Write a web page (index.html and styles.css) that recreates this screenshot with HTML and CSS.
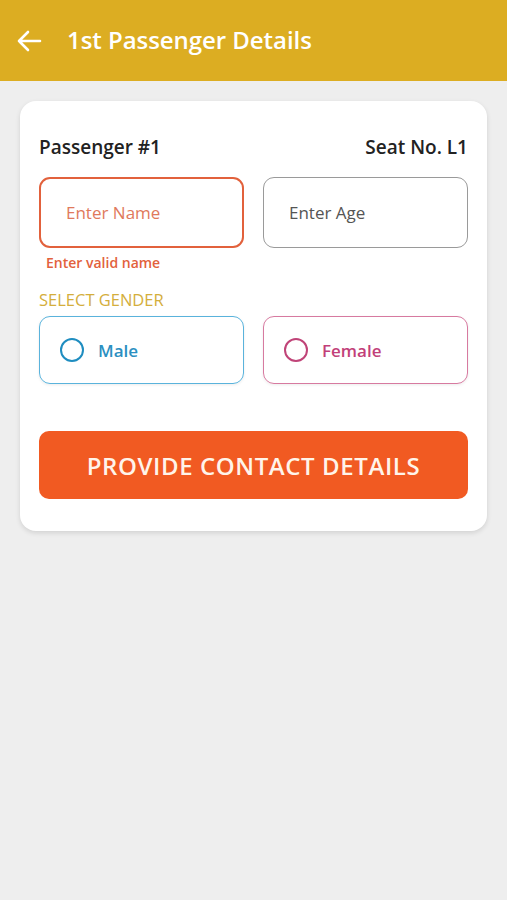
FILE: index.html
```html
<!DOCTYPE html>
<html lang="en">
<head>
    <meta charset="UTF-8">
    <title>Passenger Details</title>
    <link rel="stylesheet" href="styles.css">
</head>
<body>
    <div class="topbar">
        <svg class="back" width="26" height="22" viewBox="0 0 26 22">
            <path d="M24 11H3M12 2L3 11l9 9" fill="none" stroke="#fff" stroke-width="2.6" stroke-linecap="round" stroke-linejoin="round"/>
        </svg>
        <h1>1st Passenger Details</h1>
    </div>

    <div class="page">
        <div class="card">
            <div class="head">
                <span>Passenger #1</span>
                <span>Seat No. L1</span>
            </div>

            <div class="row">
                <div class="field">
                    <div class="input error">Enter Name</div>
                    <div class="msg">Enter valid name</div>
                </div>
                <div class="field">
                    <div class="input">Enter Age</div>
                </div>
            </div>

            <div class="label">SELECT GENDER</div>
            <div class="row">
                <div class="gender male"><i class="dot"></i>Male</div>
                <div class="gender female"><i class="dot"></i>Female</div>
            </div>

            <button class="go">PROVIDE CONTACT DETAILS</button>
        </div>
    </div>
</body>
</html>
```

FILE: styles.css
```css
body{
    margin: 0;
    background: #eeeeee;
    font-family: "Open Sans", "Noto Sans", sans-serif;
}

.topbar{
    height: 81px;
    background: #dcad22;
    display: flex;
    align-items: center;
    padding-left: 16px;
    padding-bottom: 2px;
    box-sizing: border-box;
}
.back{
    margin-right: 25px;
    margin-top: 2px;
}
.topbar h1{
    margin: 0;
    color: #fff;
    font-size: 24px;
    font-weight: 600;
    letter-spacing: -0.05px;
}

.page{
    padding: 20px 20px;
}
.card{
    background: #fff;
    border-radius: 16px;
    padding: 34px 19px 32px 19px;
    box-shadow: 0 2px 5px rgba(0,0,0,0.12);
}
.head{
    display: flex;
    justify-content: space-between;
    font-size: 19px;
    font-weight: 600;
    color: #222;
    line-height: 24px;
}

.row{
    display: flex;
    gap: 19px;
}
.row > *{
    flex: 1;
}
.head + .row{
    margin-top: 18px;
}

.input{
    height: 71px;
    box-sizing: border-box;
    border: 1.5px solid #9a9a9a;
    border-radius: 11px;
    display: flex;
    align-items: center;
    padding-left: 25px;
    font-size: 17px;
    color: #555;
}
.input.error{
    border: 2px solid #e2613c;
    color: #e0795c;
}
.msg{
    margin: 5px 0 0 7px;
    font-size: 14px;
    line-height: 19px;
    font-weight: 600;
    color: #e2613c;
}

.label{
    margin: 16px 0 5px 0;
    font-size: 16.5px;
    line-height: 23px;
    color: #d4ae3c;
}

.gender{
    height: 68px;
    box-sizing: border-box;
    border-radius: 11px;
    display: flex;
    align-items: center;
    padding-left: 20px;
    font-size: 17px;
    font-weight: 600;
    box-shadow: 0 1px 3px rgba(0,0,0,0.08);
}
.dot{
    width: 24px;
    height: 24px;
    box-sizing: border-box;
    border-radius: 50%;
    margin-right: 14px;
}
.male{
    border: 1.5px solid #5ab3dc;
    color: #2b8fc1;
}
.male .dot{
    border: 2.5px solid #1f8dc0;
}
.female{
    border: 1.5px solid #d77aa0;
    color: #c23f79;
}
.female .dot{
    border: 2.5px solid #c04478;
}

.go{
    display: block;
    width: 100%;
    height: 68px;
    margin-top: 47px;
    border: none;
    border-radius: 10px;
    background: #f15a22;
    color: #fff4ea;
    font-family: inherit;
    font-size: 24px;
    font-weight: 600;
    letter-spacing: 0.6px;
}
```
